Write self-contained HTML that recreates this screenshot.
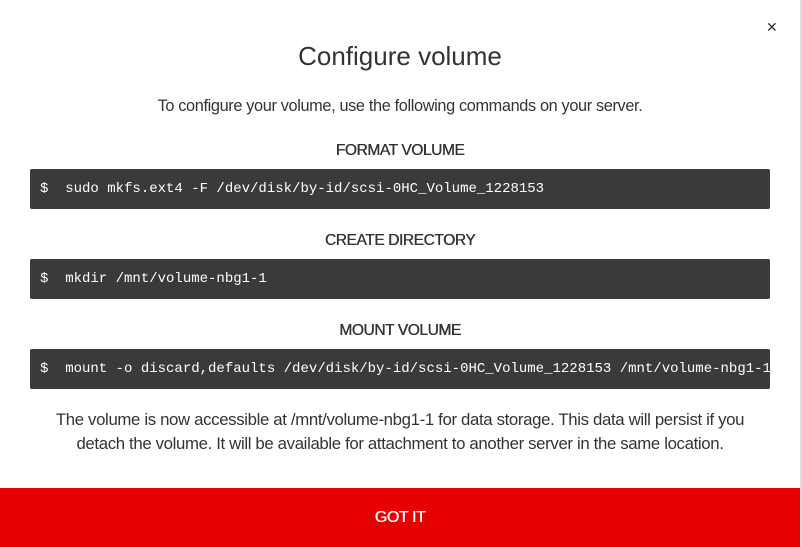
<!DOCTYPE html>
<html><head><style>
body{margin:0;width:802px;height:547px;background:#fff;font-family:"Liberation Sans",sans-serif;color:#333;position:relative;overflow:hidden}
.edge{position:absolute;right:0;top:0;width:2px;height:547px;background:#ddd}
.x{position:absolute;left:766px;top:19px;font-size:14px;color:#333}
h1{position:absolute;top:41px;left:0;width:800px;text-align:center;margin:0;font-weight:normal;font-size:26px;color:#333}
.sub{position:absolute;top:97px;left:0;width:800px;text-align:center;font-size:16.3px;letter-spacing:-0.35px}
.h{position:absolute;left:0;width:800px;text-align:center;font-size:15.5px;font-weight:normal;letter-spacing:-0.4px;color:#333;text-shadow:0.4px 0 0 #333}
.code{position:absolute;left:30px;width:740px;height:40px;background:#3a3a3a;border-radius:2px;color:#fff;font-family:"Liberation Mono",monospace;font-size:14px;line-height:40px;padding-left:10px;box-sizing:border-box;white-space:pre;overflow:hidden}
.p{position:absolute;top:408px;left:0;width:800px;text-align:center;font-size:16.8px;line-height:24px;letter-spacing:-0.35px}
.btn{position:absolute;left:0;top:488px;width:800px;height:59px;background:#e60000;color:#fff;text-align:center;line-height:59px;font-size:16px;font-weight:normal;letter-spacing:-0.4px;text-shadow:0.4px 0 0 #fff}
</style></head><body>
<div class="edge"></div>
<div class="x">✕</div>
<h1>Configure volume</h1>
<div class="sub">To configure your volume, use the following commands on your server.</div>
<div class="h" style="top:142px">FORMAT VOLUME</div>
<div class="code" style="top:169px">$  sudo mkfs.ext4 -F /dev/disk/by-id/scsi-0HC_Volume_1228153</div>
<div class="h" style="top:232px">CREATE DIRECTORY</div>
<div class="code" style="top:259px">$  mkdir /mnt/volume-nbg1-1</div>
<div class="h" style="top:322px">MOUNT VOLUME</div>
<div class="code" style="top:349px">$  mount -o discard,defaults /dev/disk/by-id/scsi-0HC_Volume_1228153 /mnt/volume-nbg1-1</div>
<div class="p">The volume is now accessible at /mnt/volume-nbg1-1 for data storage. This data will persist if you<br>detach the volume. It will be available for attachment to another server in the same location.</div>
<div class="btn">GOT IT</div>
</body></html>
